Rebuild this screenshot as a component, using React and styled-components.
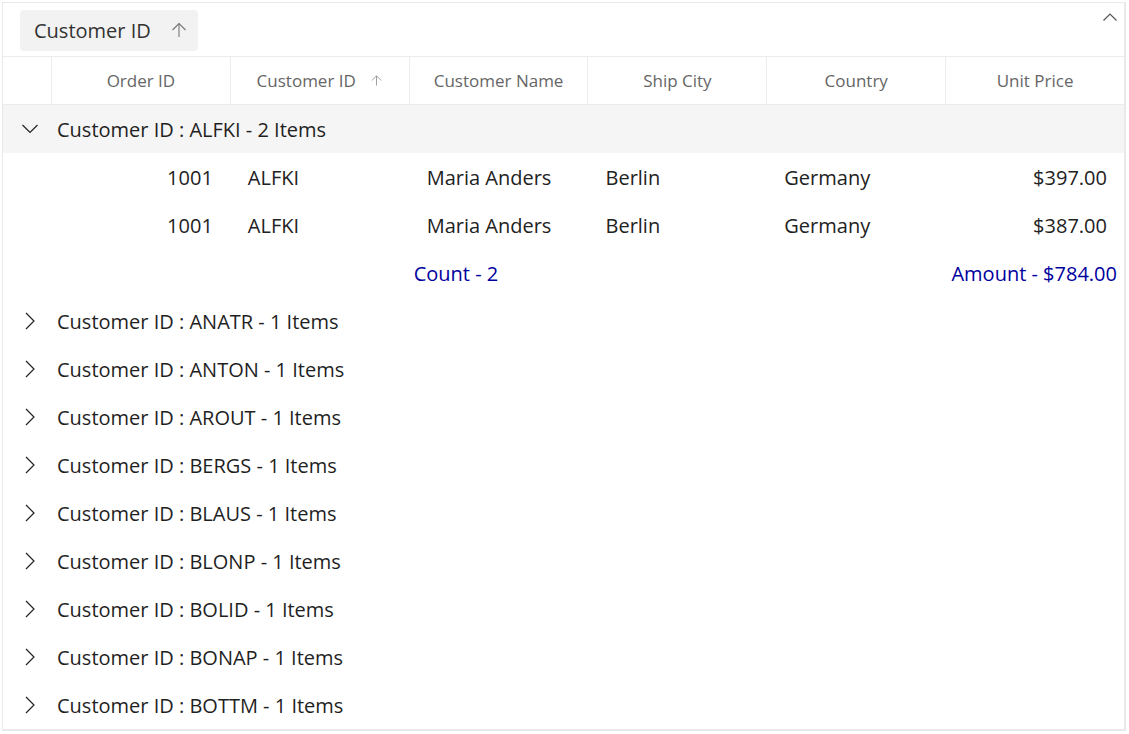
import React from "react";
import styled, { createGlobalStyle } from "styled-components";

const GlobalStyle = createGlobalStyle`
  html, body {
    margin: 0;
    padding: 0;
    background: #ffffff;
  }
  body {
    font-family: "Segoe UI", "Open Sans", "Noto Sans", sans-serif;
  }
`;

const columns = ["Order ID", "Customer ID", "Customer Name", "Ship City", "Country", "Unit Price"];

const rows = [
  { id: 1001, customer: "ALFKI", name: "Maria Anders", city: "Berlin", country: "Germany", price: "$397.00" },
  { id: 1001, customer: "ALFKI", name: "Maria Anders", city: "Berlin", country: "Germany", price: "$387.00" },
];

const collapsed = ["ANATR", "ANTON", "AROUT", "BERGS", "BLAUS", "BLONP", "BOLID", "BONAP", "BOTTM"];

const UpArrow = ({ size = 18 }) => (
  <svg width={size} height={size} viewBox="0 0 18 18" fill="none" stroke="currentColor" strokeWidth="1.1">
    <path d="M9 16V2.5" />
    <path d="M2.5 9L9 2.5L15.5 9" />
  </svg>
);

const Chevron = ({ dir }) => (
  <svg width="18" height="18" viewBox="0 0 18 18" fill="none" stroke="#222" strokeWidth="1.2">
    {dir === "down" ? <path d="M1.5 5L9 12.5L16.5 5" /> : <path d="M5 1L13 9L5 17" />}
  </svg>
);

const Grid = () => (
  <>
    <GlobalStyle />
    <Frame>
      <GroupPanel>
        <GroupChip>
          Customer ID
          <ChipArrow>
            <UpArrow size={18} />
          </ChipArrow>
        </GroupChip>
        <CollapseButton>
          <svg width="16" height="10" viewBox="0 0 16 10" fill="none" stroke="#555" strokeWidth="1.2">
            <path d="M1.5 8.5L8 2L14.5 8.5" />
          </svg>
        </CollapseButton>
      </GroupPanel>

      <HeaderRow>
        <HeaderCell />
        {columns.map((c) => (
          <HeaderCell key={c}>
            {c}
            {c === "Customer ID" && (
              <SortIcon>
                <UpArrow size={13} />
              </SortIcon>
            )}
          </HeaderCell>
        ))}
      </HeaderRow>

      <CaptionRow expanded>
        <IconCell>
          <Chevron dir="down" />
        </IconCell>
        <CaptionText>Customer ID : ALFKI - 2 Items</CaptionText>
      </CaptionRow>

      {rows.map((r, i) => (
        <DataRow key={i}>
          <span />
          <Cell align="right">{r.id}</Cell>
          <Cell>{r.customer}</Cell>
          <Cell>{r.name}</Cell>
          <Cell>{r.city}</Cell>
          <Cell>{r.country}</Cell>
          <Cell align="right">{r.price}</Cell>
        </DataRow>
      ))}

      <DataRow>
        <span />
        <span />
        <span />
        <SummaryCell>Count - 2</SummaryCell>
        <span />
        <span />
        <SummaryCell align="right">Amount - $784.00</SummaryCell>
      </DataRow>

      {collapsed.map((id) => (
        <CaptionRow key={id}>
          <IconCell>
            <Chevron dir="right" />
          </IconCell>
          <CaptionText>Customer ID : {id} - 1 Items</CaptionText>
        </CaptionRow>
      ))}
    </Frame>
  </>
);

const Frame = styled.div`
  margin: 2px 0 0 2px;
  width: 1121px;
  border: 1px solid #e9e9e9;
  border-right-width: 2px;
  border-bottom-width: 2px;
  background: #fff;
  color: #212121;
`;

const GroupPanel = styled.div`
  height: 53px;
  border-bottom: 1px solid #ececec;
  display: flex;
  align-items: center;
  padding-left: 17px;
  position: relative;
`;

const GroupChip = styled.div`
  display: flex;
  align-items: center;
  height: 41px;
  margin-top: 1px;
  padding: 0 10px 0 14px;
  background: #f2f2f2;
  border-radius: 4px;
  font-size: 20px;
  color: #333;
`;

const ChipArrow = styled.span`
  display: flex;
  margin-left: 19px;
  color: #777;
`;

const CollapseButton = styled.span`
  position: absolute;
  right: 6px;
  top: 9px;
  display: flex;
`;

const cols = "48px repeat(6, 1fr)";

const HeaderRow = styled.div`
  display: grid;
  grid-template-columns: ${cols};
  height: 47px;
  border-bottom: 1px solid #ececec;
`;

const HeaderCell = styled.div`
  display: flex;
  align-items: center;
  justify-content: center;
  font-size: 17px;
  color: #666;
  border-left: 1px solid #ececec;
  &:first-child {
    border-left: none;
  }
`;

const SortIcon = styled.span`
  display: flex;
  margin-left: 14px;
  color: #888;
`;

const CaptionRow = styled.div`
  display: flex;
  align-items: center;
  height: 48px;
  background: ${(p) => (p.expanded ? "#f5f5f5" : "transparent")};
`;

const IconCell = styled.div`
  width: 54px;
  display: flex;
  justify-content: center;
`;

const CaptionText = styled.span`
  font-size: 20px;
  color: #1f1f1f;
`;

const DataRow = styled.div`
  display: grid;
  grid-template-columns: ${cols};
  height: 48px;
  align-items: center;
`;

const Cell = styled.div`
  font-size: 20px;
  color: #222;
  padding: 0 17px 0 18px;
  text-align: ${(p) => p.align || "left"};
  white-space: nowrap;
`;

const SummaryCell = styled.div`
  font-size: 20px;
  color: #00009e;
  padding: 0 7px 0 5px;
  text-align: ${(p) => p.align || "left"};
  white-space: nowrap;
`;

export default Grid;
